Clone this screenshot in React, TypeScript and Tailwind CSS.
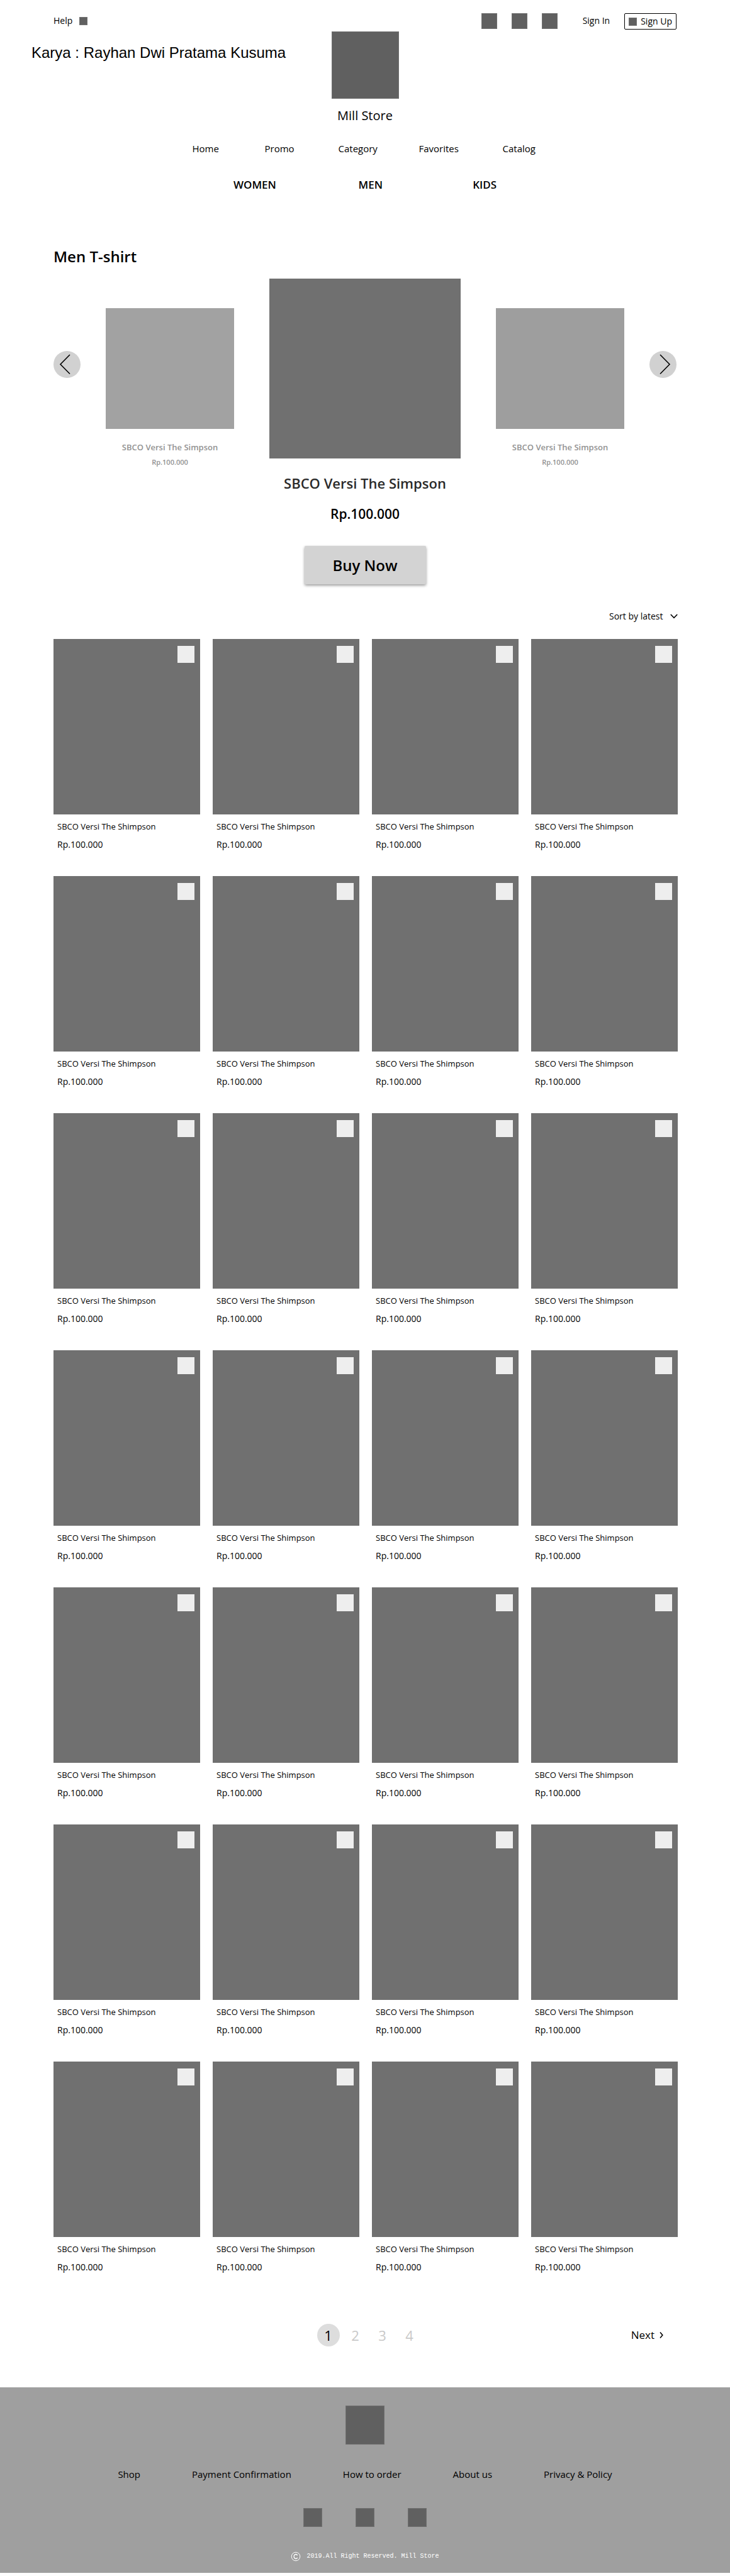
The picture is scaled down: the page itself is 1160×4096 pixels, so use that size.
import { ReactNode } from "react";

const mainLinks = ["Home", "Promo", "Category", "Favorites", "Catalog"];
const footerLinks = ["Shop", "Payment Confirmation", "How to order", "About us", "Privacy & Policy"];
const products = Array.from({ length: 28 }, (_, i) => ({
  id: i,
  name: "SBCO Versi The Shimpson",
  price: "Rp.100.000",
}));

function IconBox({ className, label }: { className: string; label: string }) {
  return (
    <a href="#" aria-label={label} className={`block shrink-0 border border-[#707070] bg-[#606060] ${className}`} />
  );
}

function Header() {
  return (
    <header className="flex flex-col pt-[21px]">
      <div className="flex h-[26px] items-start justify-between px-[85px] text-sm">
        <a href="#" className="flex h-6 items-center gap-[11px]">
          Help
          <span className="size-[13px] border border-[#707070] bg-[#606060]" />
        </a>
        <div className="flex h-full items-start">
          <div className="flex gap-[23px]">
            <IconBox className="size-[25px]" label="Search" />
            <IconBox className="size-[25px]" label="Wishlist" />
            <IconBox className="size-[25px]" label="Cart" />
          </div>
          <a href="#" className="ml-10 leading-6">
            Sign In
          </a>
          <button
            type="button"
            className="ml-[23px] flex h-full items-center gap-[6px] rounded-xs border border-black px-[6px]"
          >
            <span className="size-[13px] border border-[#707070] bg-[#606060]" />
            Sign Up
          </button>
        </div>
      </div>

      <div className="mt-[3px] grid grid-cols-[1fr_auto_1fr] items-start">
        <p className="pt-[18px] pl-[50px] font-['Liberation_Sans',Arial,sans-serif] text-2xl leading-8">
          Karya : Rayhan Dwi Pratama Kusuma
        </p>
        <IconBox className="size-[107px]" label="Mill Store home" />
      </div>
      <p className="mt-[13px] text-center text-xl leading-7">Mill Store</p>

      <nav
        aria-label="Main"
        className="mx-auto mt-[26px] grid w-full max-w-[549px] grid-cols-[115fr_117fr_128fr_133fr_56fr] text-[15px] leading-6"
      >
        {mainLinks.map((link) => (
          <a key={link} href="#">
            {link}
          </a>
        ))}
      </nav>
      <nav
        aria-label="Departments"
        className="mx-auto mt-[34px] grid w-full max-w-[418px] grid-cols-[199fr_182fr_37fr] text-[17px] leading-6 font-semibold"
      >
        <a href="#">WOMEN</a>
        <a href="#">MEN</a>
        <a href="#">KIDS</a>
      </nav>
    </header>
  );
}

function ArrowButton({ label, children }: { label: string; children: ReactNode }) {
  return (
    <button type="button" aria-label={label} className="mt-[115px] size-[43px] shrink-0 rounded-full bg-[#d1d1d1]">
      <svg viewBox="0 0 43 43" className="size-full" fill="none" stroke="#000" strokeWidth="1.6">
        {children}
      </svg>
    </button>
  );
}

function SideSlide({ tone }: { tone: string }) {
  return (
    <article className="w-[204px] pt-[47px] text-center font-semibold text-[#929292]">
      <div className={`h-48 ${tone}`} />
      <h3 className="mt-[19px] text-[13px] leading-5">SBCO Versi The Simpson</h3>
      <p className="mt-1 text-[11px] leading-5">Rp.100.000</p>
    </article>
  );
}

function Carousel() {
  return (
    <section className="px-[85px]">
      <h2 className="mt-[86px] text-2xl leading-8 font-semibold">Men T-shirt</h2>
      <div className="mt-[19px] flex items-start justify-between">
        <div className="flex items-start gap-10">
          <ArrowButton label="Previous product">
            <path d="M26 6 L11 21.2 L26 36.5" />
          </ArrowButton>
          <SideSlide tone="bg-[#a2a2a2]" />
        </div>
        <article className="w-[304px] text-center font-semibold">
          <div className="h-[286px] bg-[#707070]" />
          <h3 className="mt-[23px] text-[22px] leading-8 text-[#2a2a2a]">SBCO Versi The Simpson</h3>
          <p className="mt-[17px] text-[21px] leading-8">Rp.100.000</p>
          <button
            type="button"
            className="mt-[35px] h-[61px] w-[193px] rounded-xs bg-[#d3d3d3] text-2xl shadow-[0_2px_4px_rgba(0,0,0,0.4)]"
          >
            Buy Now
          </button>
        </article>
        <div className="flex items-start gap-10">
          <SideSlide tone="bg-[#9e9e9e]" />
          <ArrowButton label="Next product">
            <path d="M17 6 L32 21.2 L17 36.5" />
          </ArrowButton>
        </div>
      </div>
    </section>
  );
}

function ProductCard({ name, price }: { name: string; price: string }) {
  return (
    <article>
      <div className="flex h-[279px] items-start justify-end bg-[#707070] pt-[11px] pr-[9px]">
        <button type="button" aria-label="Add to favorites" className="size-[27px] bg-[#eee]" />
      </div>
      <h3 className="mt-[9px] pl-[6px] text-[13px] leading-5">{name}</h3>
      <p className="mt-[9px] pl-[6px] text-sm leading-5">{price}</p>
    </article>
  );
}

function Catalog() {
  return (
    <section className="pr-[83px] pl-[85px]">
      <div className="mt-[41px] flex items-center justify-end gap-[11px]">
        <select aria-label="Sort products" className="h-5 appearance-none bg-transparent text-sm leading-5">
          <option>Sort by latest</option>
        </select>
        <svg viewBox="0 0 12 8" className="h-2 w-3" fill="none" stroke="#000" strokeWidth="1.6">
          <path d="M0.8 1 L6 6.4 L11.2 1" />
        </svg>
      </div>
      <div className="mt-[26px] grid grid-cols-4 gap-x-5 gap-y-10">
        {products.map((p) => (
          <ProductCard key={p.id} name={p.name} price={p.price} />
        ))}
      </div>
      <nav aria-label="Pagination" className="mt-20 grid grid-cols-[1fr_auto_1fr] items-center pl-[10px]">
        <div className="col-start-2 flex gap-[7px] text-[22px] text-[#c9c9c9]">
          <button type="button" aria-current="page" className="size-9 rounded-full bg-[#ddd] text-black">
            1
          </button>
          <button type="button" className="size-9">2</button>
          <button type="button" className="size-9">3</button>
          <button type="button" className="size-9">4</button>
        </div>
        <a href="#" className="flex items-center gap-2 justify-self-end pr-[23px] text-[17px] leading-6">
          Next
          <svg viewBox="0 0 6 10" className="h-[10px] w-[6px]" fill="none" stroke="#000" strokeWidth="1.6">
            <path d="M1 0.6 L4.8 5 L1 9.4" />
          </svg>
        </a>
      </nav>
    </section>
  );
}

function Footer() {
  return (
    <footer className="mt-[65px] flex flex-col items-center bg-[#9f9f9f] pt-[29px] pb-[18px]">
      <IconBox className="size-[62px]" label="Mill Store home" />
      <nav aria-label="Footer" className="mt-[35px] flex gap-[82px] text-[15px] leading-6">
        {footerLinks.map((link) => (
          <a key={link} href="#">
            {link}
          </a>
        ))}
      </nav>
      <div className="mt-[42px] flex gap-[53px]">
        <IconBox className="size-[30px]" label="Facebook" />
        <IconBox className="size-[30px]" label="Instagram" />
        <IconBox className="size-[30px]" label="Twitter" />
      </div>
      <p className="mt-[39px] flex items-center gap-[9px] font-['Liberation_Mono',monospace] text-[10px] leading-4 text-white">
        <svg viewBox="0 0 16 16" className="size-4" fill="none" stroke="#fff">
          <circle cx="8" cy="8" r="6.8" strokeWidth="1" />
          <path d="M10.6 6.2 A2.9 3.6 0 1 0 10.6 9.8" strokeWidth="1.5" />
        </svg>
        2019.All Right Reserved. Mill Store
      </p>
    </footer>
  );
}

export default function App() {
  return (
    <div className="bg-white pb-[5px] font-['Open_Sans','Noto_Sans',sans-serif] text-black">
      <Header />
      <main>
        <Carousel />
        <Catalog />
      </main>
      <Footer />
    </div>
  );
}
